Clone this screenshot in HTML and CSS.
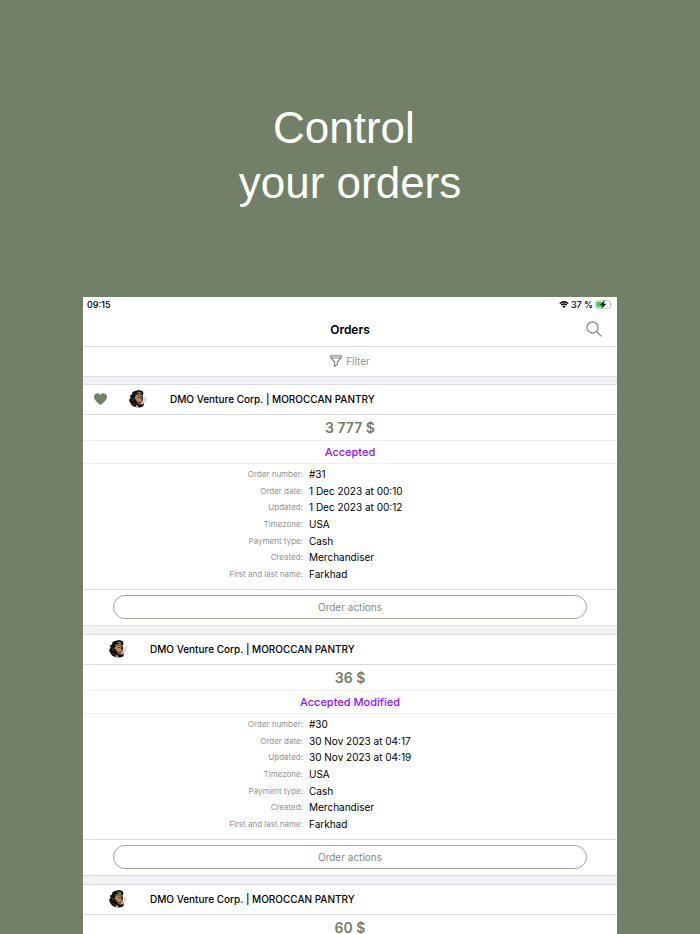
FILE: index.html
```html
<!DOCTYPE html>
<html lang="en">
<head>
    <meta charset="UTF-8">
    <meta name="viewport" content="width=device-width, initial-scale=1.0">
    <title>Control your orders</title>
    <link rel="stylesheet" href="styles.css">
</head>
<body>
    <!-- shared drawings -->
    <svg class="sprite" aria-hidden="true">
        <symbol id="avatar" viewBox="0 0 36 36">
            <path d="M12 2 L20 0 L27 2 L29 7 L27 11 L28 17 L27 24 L30 28 L28 33 L22 35 L12 34 L6 31 L2 25 L0 20 L3 16 L2 11 L6 9 L7 4 Z" fill="#120f0c"/>
            <path d="M15 11 L21 11 L25 14 L25 18 L27 21 L24 24 L20 25 L15 22 L13 18 L11 19 L12 14 Z" fill="#b9815c"/>
            <path d="M15 5 L20 3 L24 5 L26 9 L21 8 Z" fill="#6f7565"/>
            <path d="M13 9 L20 8 L27 11 L26 13 L19 11 L13 12 Z" fill="#71864c"/>
            <path d="M18 15 L21 15 M23 16 L25 16" stroke="#2a1b13" stroke-width="2"/>
            <path d="M16 23 L22 26 L25 24 L27 27 L24 30 L18 28 Z" fill="#8e5840"/>
            <path d="M24 25 L28 22 L30 25 L27 29 L24 28 Z" fill="#e0b28d"/>
            <path d="M29 16 L33 13 L35 16 L34 23 L31 25 L29 22 Z" fill="#d3dec5"/>
            <path d="M5 15 L9 18 L6 22 M7 27 L12 29" fill="none" stroke="#77634d" stroke-width="1"/>
            <path d="M14 30 L19 32 L17 34 L13 33 Z" fill="#cfc5ba"/>
        </symbol>
    </svg>

    <h1 class="headline">Control <br>your orders</h1>

    <main class="tablet">
        <div class="status-bar">
            <span>09:15</span>
            <div class="status-right">
                <svg class="wifi" viewBox="0 0 20 14" aria-hidden="true">
                    <path d="M1.5 5.2 Q10 -2.4 18.5 5.2 M4.6 8.6 Q10 3.8 15.4 8.6" fill="none" stroke="#000" stroke-width="2.8"/>
                    <path d="M10 14 L6.8 10.8 Q10 8 13.2 10.8 Z" fill="#000"/>
                </svg>
                <span>37 %</span>
                <svg class="battery" viewBox="0 0 36 18" aria-hidden="true">
                    <rect x="1" y="1.5" width="30" height="15" rx="4" fill="#fff" stroke="#a8a8a8" stroke-width="1.5"/>
                    <rect x="3" y="3.5" width="12" height="11" rx="2" fill="#3ecb5c"/>
                    <path d="M33 6.5 Q36 9 33 11.5 Z" fill="#a8a8a8"/>
                    <path d="M20 0 L9 10.5 H15 L12.5 18 L23 7.5 H17.5 Z" fill="#111" stroke="#fff" stroke-width="1" paint-order="stroke"/>
                </svg>
            </div>
        </div>

        <header class="nav-bar">
            <h2 class="nav-title">Orders</h2>
            <button class="icon-button" type="button" aria-label="Search">
                <svg viewBox="0 0 16 16" aria-hidden="true">
                    <circle cx="6.5" cy="6.5" r="5.6"/>
                    <path d="M10.6 10.6 L15.2 15.2"/>
                </svg>
            </button>
        </header>

        <button class="filter" type="button">
            <svg viewBox="0 0 12 12" aria-hidden="true">
                <path d="M0.7 0.8 H11.3 V2.7 L7.4 7 V9.6 L4.6 11.4 V7 L0.7 2.7 Z M1 3 H11"/>
            </svg>
            Filter
        </button>

        <section class="order">
            <div class="order-head">
                <svg class="heart" viewBox="0 0 13 12" aria-label="Favourite">
                    <path d="M6.5 12 C5.5 11 0 7.6 0 3.7 C0 0.2 4.6 -1.2 6.5 1.8 C8.4 -1.2 13 0.2 13 3.7 C13 7.6 7.5 11 6.5 12 Z"/>
                </svg>
                <svg class="avatar" aria-hidden="true"><use href="#avatar"/></svg>
                <h3 class="shop">DMO Venture Corp. | MOROCCAN PANTRY</h3>
            </div>
            <p class="price">3 777 $</p>
            <p class="state">Accepted</p>
            <dl class="details">
                <dt>Order number:</dt><dd>#31</dd>
                <dt>Order date:</dt><dd>1 Dec 2023 at 00:10</dd>
                <dt>Updated:</dt><dd>1 Dec 2023 at 00:12</dd>
                <dt>Timezone:</dt><dd>USA</dd>
                <dt>Payment type:</dt><dd>Cash</dd>
                <dt>Created:</dt><dd>Merchandiser</dd>
                <dt>First and last name:</dt><dd>Farkhad</dd>
            </dl>
            <div class="actions">
                <button class="action-button" type="button">Order actions</button>
            </div>
        </section>

        <section class="order">
            <div class="order-head order-head-plain">
                <svg class="avatar" aria-hidden="true"><use href="#avatar"/></svg>
                <h3 class="shop">DMO Venture Corp. | MOROCCAN PANTRY</h3>
            </div>
            <p class="price">36 $</p>
            <p class="state">Accepted Modified</p>
            <dl class="details">
                <dt>Order number:</dt><dd>#30</dd>
                <dt>Order date:</dt><dd>30 Nov 2023 at 04:17</dd>
                <dt>Updated:</dt><dd>30 Nov 2023 at 04:19</dd>
                <dt>Timezone:</dt><dd>USA</dd>
                <dt>Payment type:</dt><dd>Cash</dd>
                <dt>Created:</dt><dd>Merchandiser</dd>
                <dt>First and last name:</dt><dd>Farkhad</dd>
            </dl>
            <div class="actions">
                <button class="action-button" type="button">Order actions</button>
            </div>
        </section>

        <section class="order">
            <div class="order-head order-head-plain">
                <svg class="avatar" aria-hidden="true"><use href="#avatar"/></svg>
                <h3 class="shop">DMO Venture Corp. | MOROCCAN PANTRY</h3>
            </div>
            <p class="price">60 $</p>
        </section>
    </main>
</body>
</html>
```
FILE: styles.css
```css
* {
    box-sizing: border-box;
}
body {
    margin: 0;
    padding: 100px 83px 0;
    height: 100vh;
    overflow: hidden;
    background-color: #728068;
    font-family: Inter, "Liberation Sans", sans-serif;
    color: #000;
}
h1, h2, h3, p, dl, dd {
    margin: 0;
}
button {
    font-family: inherit;
    cursor: pointer;
}
.sprite {
    display: none;
}
.headline {
    margin-bottom: 87px;
    color: #fff;
    font-family: "Liberation Sans", Arial, sans-serif;
    font-size: 44px;
    font-weight: 400;
    line-height: 55px;
    text-align: center;
    white-space: pre-wrap;
}
.tablet {
    background-color: #f1f1f6;
}

/* top bars */
.status-bar {
    display: flex;
    justify-content: space-between;
    align-items: center;
    height: 15px;
    padding: 0 4px;
    background-color: #fff;
    font-size: 9px;
    font-weight: 500;
}
.status-right {
    display: flex;
    align-items: center;
    gap: 2px;
}
.wifi {
    width: 10px;
    height: 7px;
}
.battery {
    width: 18px;
    height: 9px;
}
.nav-bar {
    display: grid;
    grid-template-columns: 1fr auto 1fr;
    align-items: center;
    height: 35px;
    padding: 0 15px;
    background-color: #fff;
    border-bottom: 1px solid #dcdcde;
}
.nav-title {
    grid-column: 2;
    font-size: 12px;
    font-weight: 600;
}
.icon-button {
    justify-self: end;
    width: 16px;
    height: 16px;
    padding: 0;
    border: none;
    background: none;
}
.icon-button svg {
    display: block;
    fill: none;
    stroke: #728068;
    stroke-width: 1.1;
    stroke-linecap: round;
}
.filter {
    display: flex;
    justify-content: center;
    align-items: center;
    gap: 4px;
    width: 100%;
    height: 30px;
    padding: 0 0 1px;
    border: none;
    border-bottom: 1px solid #dcdcde;
    background-color: #fff;
    color: #929292;
    font-size: 10px;
}
.filter svg {
    width: 12px;
    height: 12px;
    fill: none;
    stroke: #858585;
    stroke-width: 1.2;
    stroke-linejoin: round;
}

/* orders */
.order {
    margin-top: 7px;
    margin-bottom: 8px;
    border-top: 1px solid #dcdcde;
    border-bottom: 1px solid #dcdcde;
    background-color: #fff;
}
.order + .order {
    margin-top: 0;
}
.order-head {
    display: flex;
    align-items: center;
    height: 30px;
    padding-bottom: 1px;
    padding-left: 11px;
    border-bottom: 1px solid #dcdcde;
}
.order-head-plain {
    padding-left: 26px;
}
.heart {
    width: 13px;
    height: 12px;
    margin-right: 22px;
    fill: #728068;
}
.avatar {
    width: 18px;
    height: 18px;
    margin-right: 23px;
}
.shop {
    font-size: 10px;
    font-weight: 500;
}
.price {
    height: 26px;
    border-bottom: 1px solid #f0f0f0;
    color: #728068;
    font-size: 14px;
    font-weight: 600;
    line-height: 25px;
    text-align: center;
}
.state {
    height: 23px;
    border-bottom: 1px solid #f0f0f0;
    color: #9012fe;
    font-size: 11px;
    font-weight: 500;
    line-height: 22px;
    text-align: center;
}
.details {
    display: grid;
    grid-template-columns: 5fr 7fr;
    grid-template-rows: repeat(7, 1fr);
    align-items: center;
    column-gap: 6px;
    height: 126px;
    padding: 2px 0 7px;
    border-bottom: 1px solid #dcdcde;
    font-size: 10px;
    line-height: 16px;
}
.details dt {
    color: #929292;
    font-size: 8px;
    text-align: right;
}
.actions {
    padding: 5px 30px 6px;
}
.action-button {
    display: block;
    width: 100%;
    height: 24px;
    padding: 0;
    border: 1px solid #9fa896;
    border-radius: 12px;
    background-color: #fff;
    color: #7f8b76;
    font-size: 10px;
}
```
